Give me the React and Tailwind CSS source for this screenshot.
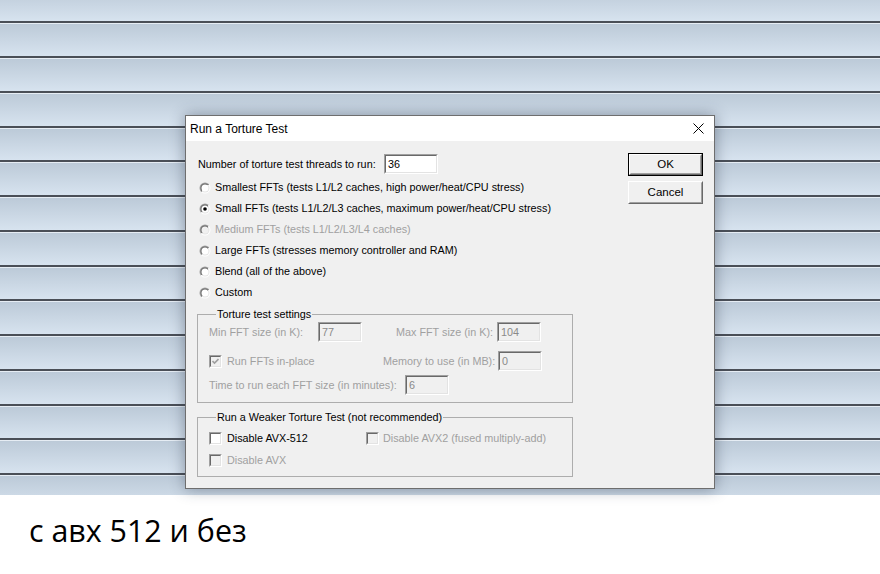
import React from 'react';

const STRIPES = Array.from({ length: 15 });

const Radio = ({ checked = false, disabled = false }) => (
    <svg width="12" height="12" viewBox="0 0 12 12" className="shrink-0">
        <defs>
            <linearGradient id="ro" x1="0" y1="0" x2="1" y2="1">
                <stop offset="0.5" stopColor="#a0a0a0" />
                <stop offset="0.5" stopColor="#ffffff" />
            </linearGradient>
            <linearGradient id="ri" x1="0" y1="0" x2="1" y2="1">
                <stop offset="0.5" stopColor="#696969" />
                <stop offset="0.5" stopColor="#e3e3e3" />
            </linearGradient>
        </defs>
        <circle cx="6" cy="6" r="5.5" fill="url(#ro)" />
        <circle cx="6" cy="6" r="4.5" fill="url(#ri)" />
        <circle cx="6" cy="6" r="3.5" fill={disabled ? '#f0f0f0' : '#ffffff'} />
        {checked && <circle cx="6" cy="6" r="1.8" fill="#000000" />}
    </svg>
);

const Check = ({ checked = false, disabled = false }) => (
    <div className="w-[13px] h-[13px] shrink-0 border border-t-[#a0a0a0] border-l-[#a0a0a0] border-b-white border-r-white">
        <div className={`w-full h-full border border-t-[#696969] border-l-[#696969] border-b-[#e3e3e3] border-r-[#e3e3e3] flex items-center justify-center ${disabled ? 'bg-[#f0f0f0]' : 'bg-white'}`}>
            {checked && (
                <svg width="7" height="7" viewBox="0 0 7 7">
                    <path d="M0.5 3 L2.5 5 L6.5 1" fill="none" stroke={disabled ? '#a0a0a0' : '#000'} strokeWidth="1.6" />
                </svg>
            )}
        </div>
    </div>
);

const Field = ({ value, width = 'w-[44px]', disabled = false }) => (
    <div className={`${width} h-[20px] shrink-0 border border-t-[#a0a0a0] border-l-[#a0a0a0] border-b-white border-r-white`}>
        <div className={`w-full h-full border border-t-[#696969] border-l-[#696969] border-b-[#e3e3e3] border-r-[#e3e3e3] pl-[2px] leading-[16px] ${disabled ? 'bg-[#f0f0f0] text-[#8a8a8a]' : 'bg-white text-black'}`}>
            {value}
        </div>
    </div>
);

const RadioRow = ({ label, checked, disabled }) => (
    <div className="h-[21px] flex items-center pl-[1px]">
        <Radio checked={checked} disabled={disabled} />
        <span className={`ml-[4px] whitespace-nowrap ${disabled ? 'text-[#a0a0a0]' : 'text-black'}`}>{label}</span>
    </div>
);

const Button = ({ children, isDefault }) => (
    <div className={`w-[75px] h-[23px] ${isDefault ? 'border border-black' : ''}`}>
        <div className="w-full h-full border border-t-white border-l-white border-b-[#696969] border-r-[#696969] bg-[#f0f0f0]">
            <div className="w-full h-full border border-t-[#f0f0f0] border-l-[#f0f0f0] border-b-[#a0a0a0] border-r-[#a0a0a0] flex items-center justify-center text-[11.5px] text-black">
                {children}
            </div>
        </div>
    </div>
);

export default function App() {
    return (
        <div className="w-[880px] h-[574px] bg-white relative overflow-hidden">
            {/* desktop stripes */}
            <div className="h-[495px] overflow-hidden">
                <div className="mt-[-13.5px] flex flex-col">
                    {STRIPES.map((_, i) => (
                        <div key={i} className="h-[34.75px] shrink-0 flex flex-col">
                            <div className="h-[2px] bg-[#4a4f57]" />
                            <div className="h-[1px] bg-[#e6edf4]" />
                            <div className="flex-1 bg-linear-to-b from-[#bccad8] to-[#d7e3ef]" />
                        </div>
                    ))}
                </div>
            </div>

            <div className="pl-[29px] pt-[17px] text-[30.4px] leading-[38px] text-black font-['Open_Sans',sans-serif]">
                с авх 512 и без
            </div>

            {/* dialog window */}
            <div className="absolute left-[185px] top-[115px] w-[530px] h-[374px] border border-[#6e6e6e] bg-[#f0f0f0] shadow-[0_0_14px_rgba(40,50,70,0.45)] font-['Liberation_Sans',Arial,sans-serif] text-[10.8px]">
                <div className="h-[25px] bg-white flex items-center justify-between pl-[4px] pr-[10px]">
                    <span className="text-[12px] text-black">Run a Torture Test</span>
                    <svg width="11" height="11" viewBox="0 0 11 11">
                        <path d="M0.5 0.5 L10.5 10.5 M10.5 0.5 L0.5 10.5" stroke="#000" strokeWidth="1" />
                    </svg>
                </div>

                <div className="flex">
                    <div className="w-[387px] pl-[12px]">
                        <div className="mt-[13px] h-[20px] flex items-center">
                            <span className="w-[186px] whitespace-nowrap">Number of torture test threads to run:</span>
                            <Field value="36" width="w-[54px]" />
                        </div>

                        <div className="mt-[3px]">
                            <RadioRow label="Smallest FFTs (tests L1/L2 caches, high power/heat/CPU stress)" />
                            <RadioRow label="Small FFTs (tests L1/L2/L3 caches, maximum power/heat/CPU stress)" checked />
                            <RadioRow label="Medium FFTs (tests L1/L2/L3/L4 caches)" disabled />
                            <RadioRow label="Large FFTs (stresses memory controller and RAM)" />
                            <RadioRow label="Blend (all of the above)" />
                            <RadioRow label="Custom" />
                        </div>

                        <fieldset className="ml-[-1px] w-[376px] border border-[#adadad] pl-[11px] pb-[7px] mt-[5px] text-[#a0a0a0]">
                            <legend className="ml-[7px] px-[1px] leading-[13px] text-black">Torture test settings</legend>
                            <div className="mt-[1px] h-[20px] flex items-center whitespace-nowrap">
                                <span className="w-[109px]">Min FFT size (in K):</span>
                                <Field value="77" disabled />
                                <span className="w-[131px] text-right">Max FFT size (in K):</span>
                                <span className="w-[4px]" />
                                <Field value="104" disabled />
                            </div>
                            <div className="mt-[9px] h-[20px] flex items-center whitespace-nowrap">
                                <Check checked disabled />
                                <span className="ml-[5px] w-[156px]">Run FFTs in-place</span>
                                <span className="w-[109px] text-right">Memory to use (in MB):</span>
                                <span className="w-[6px]" />
                                <Field value="0" disabled />
                            </div>
                            <div className="mt-[4px] h-[20px] flex items-center whitespace-nowrap">
                                <span className="w-[196px]">Time to run each FFT size (in minutes):</span>
                                <Field value="6" disabled />
                            </div>
                        </fieldset>

                        <fieldset className="ml-[-1px] w-[376px] border border-[#adadad] pl-[11px] pb-[6px] mt-[8px]">
                            <legend className="ml-[7px] px-[1px] leading-[13px] text-black">Run a Weaker Torture Test (not recommended)</legend>
                            <div className="mt-[4px] h-[20px] flex items-center whitespace-nowrap">
                                <div className="w-[157px] flex items-center">
                                    <Check />
                                    <span className="ml-[5px] text-black">Disable AVX-512</span>
                                </div>
                                <Check disabled />
                                <span className="ml-[4px] text-[#a0a0a0]">Disable AVX2 (fused multiply-add)</span>
                            </div>
                            <div className="mt-[2px] h-[20px] flex items-center whitespace-nowrap">
                                <Check disabled />
                                <span className="ml-[5px] text-[#a0a0a0]">Disable AVX</span>
                            </div>
                        </fieldset>
                    </div>

                    <div className="ml-[55px] mt-[12px] flex flex-col gap-[5px]">
                        <Button isDefault>OK</Button>
                        <Button>Cancel</Button>
                    </div>
                </div>
            </div>
        </div>
    );
}
